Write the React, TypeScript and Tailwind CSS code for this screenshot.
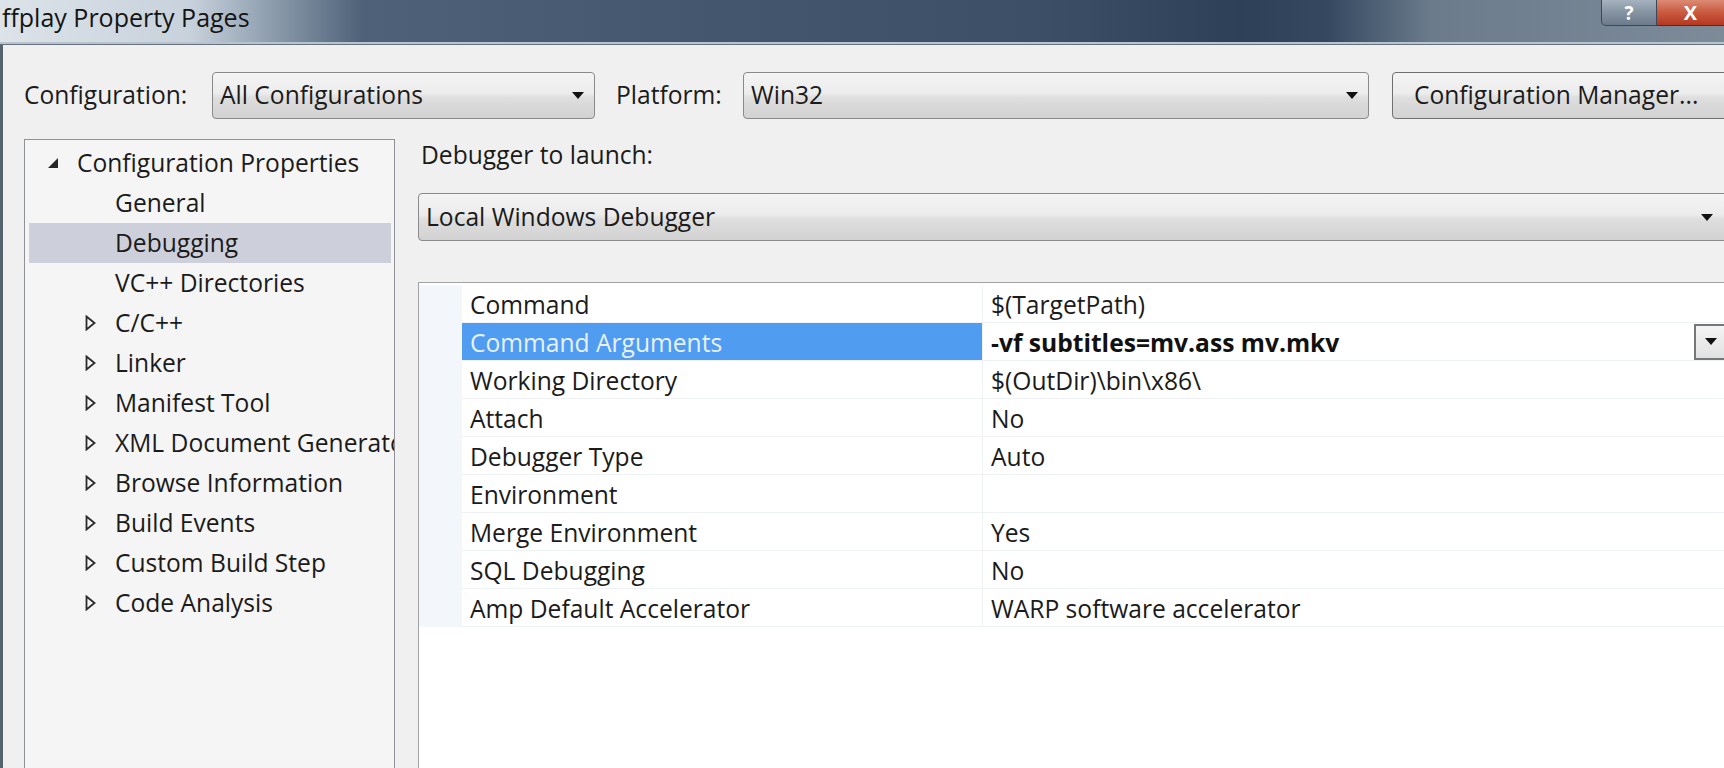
import React from 'react';

const FONT = { fontFamily: '"Open Sans", "Noto Sans", sans-serif' };

const ComboArrow = () => (
  <svg width="12" height="7" viewBox="0 0 12 7" className="shrink-0">
    <polygon points="0,0 12,0 6,7" fill="#111" />
  </svg>
);

const OpenTriangle = () => (
  <svg width="12" height="12" viewBox="0 0 12 12">
    <polygon points="11,1 11,11 1,11" fill="#262626" />
  </svg>
);

const ClosedTriangle = () => (
  <svg width="11" height="16" viewBox="0 0 11 16">
    <polygon points="1.5,1.5 9.5,8 1.5,14.5" fill="none" stroke="#2b2b2b" strokeWidth="1.8" />
  </svg>
);

const treeItems = [
  { label: 'General', children: false },
  { label: 'Debugging', children: false, selected: true },
  { label: 'VC++ Directories', children: false },
  { label: 'C/C++', children: true },
  { label: 'Linker', children: true },
  { label: 'Manifest Tool', children: true },
  { label: 'XML Document Generator', children: true },
  { label: 'Browse Information', children: true },
  { label: 'Build Events', children: true },
  { label: 'Custom Build Step', children: true },
  { label: 'Code Analysis', children: true },
];

const props = [
  { name: 'Command', value: '$(TargetPath)' },
  { name: 'Command Arguments', value: '-vf subtitles=mv.ass mv.mkv', selected: true },
  { name: 'Working Directory', value: '$(OutDir)\\bin\\x86\\' },
  { name: 'Attach', value: 'No' },
  { name: 'Debugger Type', value: 'Auto' },
  { name: 'Environment', value: '' },
  { name: 'Merge Environment', value: 'Yes' },
  { name: 'SQL Debugging', value: 'No' },
  { name: 'Amp Default Accelerator', value: 'WARP software accelerator' },
];

const comboBg =
  'bg-[linear-gradient(180deg,#f4f4f4_0%,#ececec_45%,#dedede_55%,#d2d2d2_100%)]';

export default function App() {
  return (
    <div className="w-[1724px] h-[768px] overflow-hidden flex flex-col bg-[#f0f0f0] text-[#1b1b1b]" style={FONT}>
      {/* Title bar */}
      <div className="h-[42px] shrink-0 flex items-start justify-between bg-[linear-gradient(90deg,#dce3e9_0%,#c8d2dc_11%,#8a9aab_16%,#4e6178_21%,#44576e_40%,#3c4f66_60%,#2d4058_72%,#354860_77%,#6b7b8c_83%,#7d8b99_100%)]">
        <div className="pl-[2px] pt-[1px] text-[25px] leading-[32px] text-[#141414] whitespace-nowrap">ffplay Property Pages</div>
        <div className="flex">
          <div className="w-[56px] h-[26px] flex items-center justify-center rounded-bl-[5px] border border-t-0 border-[#3b4957] bg-[linear-gradient(180deg,#a6b2be_0%,#8593a2_50%,#6c7b8b_100%)] text-white font-bold text-[19px] leading-[24px]">
            ?
          </div>
          <div className="w-[67px] h-[26px] flex items-center justify-center border border-t-0 border-l-0 border-r-0 border-[#5a2a22] bg-[linear-gradient(180deg,#dc8a74_0%,#c95a40_50%,#b5381f_100%)] text-white font-bold text-[20px] leading-[24px]">
            X
          </div>
        </div>
      </div>
      <div className="h-[2px] shrink-0 bg-[#b9c3cd]" />
      <div className="h-[1px] shrink-0 bg-[#66737f]" />

      {/* Body */}
      <div className="flex-1 min-h-0 flex flex-col border-l-[3px] border-[#56636f] pl-[21px]">
        {/* Configuration row */}
        <div className="mt-[27px] h-[47px] shrink-0 flex items-center text-[24.6px]">
          <span className="w-[188px] shrink-0">Configuration:</span>
          <div className={`w-[383px] h-full shrink-0 flex items-center justify-between pl-[7px] pr-[10px] border border-[#8a8a8a] rounded-[4px] ${comboBg}`}>
            <span>All Configurations</span>
            <ComboArrow />
          </div>
          <span className="ml-[21px] w-[127px] shrink-0">Platform:</span>
          <div className={`w-[626px] h-full shrink-0 flex items-center justify-between pl-[7px] pr-[10px] border border-[#8a8a8a] rounded-[4px] ${comboBg}`}>
            <span>Win32</span>
            <ComboArrow />
          </div>
          <div className={`ml-[23px] w-[345px] h-full shrink-0 flex items-center pl-[21px] border border-[#707070] rounded-[4px] ${comboBg}`}>
            <span className="whitespace-nowrap">Configuration Manager...</span>
          </div>
        </div>

        <div className="mt-[20px] flex-1 min-h-0 flex">
          {/* Tree */}
          <div className="w-[371px] shrink-0 h-full border border-b-0 border-[#8e9197] bg-[#f5f5f5] pl-[4px] pr-[3px] pt-[3px] text-[24.6px] overflow-hidden">
            <div className="h-[40px] flex items-center whitespace-nowrap">
              <span className="w-[18px] shrink-0" />
              <OpenTriangle />
              <span className="ml-[18px]">Configuration Properties</span>
            </div>
            {treeItems.map(item => (
              <div
                key={item.label}
                className={`h-[40px] flex items-center whitespace-nowrap ${item.selected ? 'bg-[#cdd0db]' : ''}`}
              >
                <span className="w-[86px] shrink-0 flex pl-[56px]">
                  {item.children && <ClosedTriangle />}
                </span>
                <span>{item.label}</span>
              </div>
            ))}
          </div>

          {/* Right side */}
          <div className="ml-[23px] w-[1310px] shrink-0 flex flex-col text-[24.6px]">
            <div className="h-[32px] flex items-center pl-[3px]">Debugger to launch:</div>
            <div className={`mt-[22px] h-[48px] shrink-0 flex items-center justify-between pl-[7px] pr-[14px] border border-[#8a8a8a] rounded-[4px] ${comboBg}`}>
              <span>Local Windows Debugger</span>
              <ComboArrow />
            </div>

            {/* Property grid */}
            <div className="mt-[41px] flex-1 border-l border-t border-[#a3a3a3] bg-white pt-[2px]">
              {props.map(p => (
                <div key={p.name} className="h-[38px] flex">
                  <div className="w-[43px] shrink-0 bg-[#f3f6fb]" />
                  <div
                    className={`w-[520px] shrink-0 flex items-center pl-[8px] pt-[3px] border-b border-[#eef1f6] ${
                      p.selected ? 'bg-[#4f9cf1] text-[#e8f1fc]' : ''
                    }`}
                  >
                    {p.name}
                  </div>
                  <div className="flex-1 flex items-center justify-between pl-[8px] border-l border-b border-[#eef1f6]">
                    <span className={`pt-[3px] ${p.selected ? 'font-bold text-[#111]' : ''}`}>{p.value}</span>
                    {p.selected && (
                      <div className="w-[34px] h-[36px] flex items-center justify-center border-2 border-[#767676] bg-[linear-gradient(180deg,#f4f4f4_0%,#e2e2e2_100%)]">
                        <ComboArrow />
                      </div>
                    )}
                  </div>
                </div>
              ))}
            </div>
          </div>
        </div>
      </div>
    </div>
  );
}
